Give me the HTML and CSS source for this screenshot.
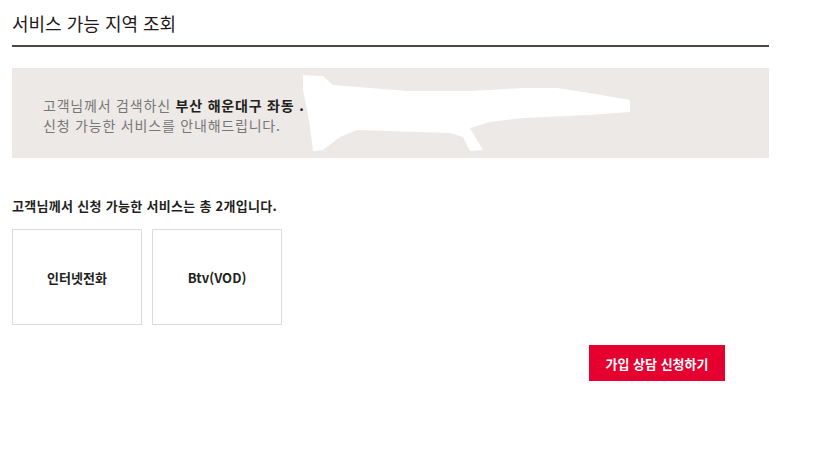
FILE: index.html
```html
<!DOCTYPE html>
<html lang="ko">
<head>
    <meta charset="UTF-8">
    <meta name="viewport" content="width=device-width, initial-scale=1.0">
    <title>서비스 가능 지역 조회</title>
    <link rel="stylesheet" href="styles.css">
</head>
<body>
    <div class="page">
        <h2 class="title">서비스 가능 지역 조회</h2>

        <div class="notice">
            <p>고객님께서 검색하신 <strong>부산 해운대구 좌동 .</strong></p>
            <p>신청 가능한 서비스를 안내해드립니다.</p>
            <svg class="mask" viewBox="12 68 757 90" width="757" height="90" aria-hidden="true">
                <polygon fill="#fff" points="303,75 323,76 333,85 407,91 470,91 523,88 557,88 590,93 630,100 630,112 590,115 523,118 490,122 470,128 477,140 483,150 470,151 463,137 450,133 357,130 340,137 323,150 313,151 310,127 307,110 303,90"/>
            </svg>
        </div>

        <p class="count">고객님께서 신청 가능한 서비스는 총 2개입니다.</p>

        <div class="services">
            <div class="service">인터넷전화</div>
            <div class="service">Btv(VOD)</div>
        </div>

        <div class="actions">
            <button type="button" class="apply">가입 상담 신청하기</button>
        </div>
    </div>
</body>
</html>
```

FILE: styles.css
```css
body {
    margin: 0;
    background-color: #fff;
    font-family: "Noto Sans CJK KR", "Noto Sans", sans-serif;
    color: #231f20;
}
.page {
    width: 757px;
    padding: 0 12px;
}
.title {
    margin: 0;
    padding: 10px 0 9px;
    font-size: 18px;
    line-height: 26px;
    font-weight: normal;
    color: #1f1a1c;
    border-bottom: 2px solid #4d4540;
}
.notice {
    position: relative;
    margin-top: 21px;
    height: 90px;
    box-sizing: border-box;
    padding: 27px 31px 0;
    background-color: #ece9e6;
    font-size: 14px;
    line-height: 20px;
    letter-spacing: 0.8px;
    color: #777;
}
.notice p {
    margin: 0;
}
.notice strong {
    color: #231f20;
}
.mask {
    position: absolute;
    left: 0;
    top: 0;
}
.count {
    margin: 39px 0 0;
    font-size: 13px;
    line-height: 18px;
    letter-spacing: 0.3px;
    font-weight: bold;
}
.services {
    display: flex;
    gap: 10px;
    margin-top: 14px;
}
.service {
    width: 130px;
    height: 96px;
    box-sizing: border-box;
    border: 1px solid #dcdcdc;
    display: flex;
    align-items: center;
    justify-content: center;
    font-size: 13px;
    font-weight: bold;
}
.actions {
    display: flex;
    justify-content: flex-end;
    margin-top: 20px;
    padding-right: 44px;
}
.apply {
    width: 136px;
    height: 36px;
    border: none;
    background-color: #e5002f;
    color: #fff;
    font-family: inherit;
    font-size: 13px;
    font-weight: bold;
    cursor: pointer;
}
```
